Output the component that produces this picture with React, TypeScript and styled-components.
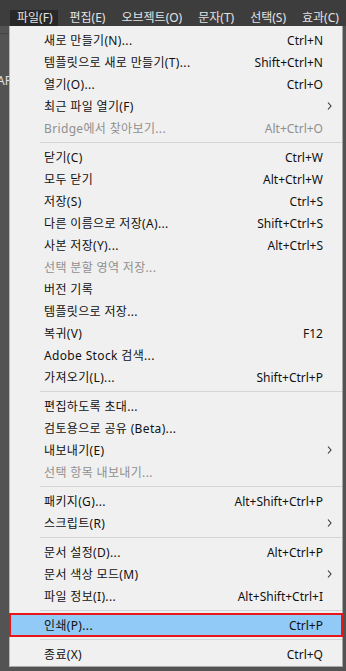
import styled, { createGlobalStyle } from 'styled-components';

const GlobalStyle = createGlobalStyle`
  html, body {
    margin: 0;
    padding: 0;
    background: #535353;
  }
  body {
    font-family: 'Noto Sans', 'Noto Sans CJK KR', sans-serif;
  }
`;

const Screen = styled.div`
  width: 346px;
  height: 671px;
  overflow: hidden;
  display: flex;
  flex-direction: column;
  background: #535353;
`;

const MenuBar = styled.div`
  height: 26px;
  flex: none;
  display: flex;
  align-items: flex-end;
  padding-left: 10px;
  background: #3d3d3d;
  box-sizing: border-box;
  overflow: hidden;
`;

const BarItem = styled.div<{ $open?: boolean }>`
  height: 16px;
  line-height: 16px;
  padding: 0 4px 0 7px;
  margin-right: 5px;
  font-size: 12px;
  color: #e4e4e4;
  white-space: nowrap;
  background: ${({ $open }) => ($open ? '#282828' : 'transparent')};

  &:first-child {
    padding-right: 5px;
  }
`;

const Body = styled.div`
  flex: 1;
  display: flex;
  min-height: 0;
`;

const SideStrip = styled.div`
  width: 9px;
  flex: none;
  overflow: hidden;
  display: flex;
  flex-direction: column;
  background: #535353;
`;

const StripLine = styled.div`
  height: 1px;
  margin-top: 7px;
  background: #444;
`;

const StripLabel = styled.div`
  margin-top: 38px;
  font-size: 12px;
  color: #e0e0e0;
  white-space: nowrap;
  margin-left: -3px;
`;

const Menu = styled.div`
  width: 334px;
  flex: none;
  align-self: flex-start;
  background: #f0f0f0;
  border-left: 1px solid #b9b9b9;
  border-right: 1px solid #a7a7a7;
  border-bottom: 1px solid #a7a7a7;
  padding: 3px 0 1px;
  box-sizing: border-box;
`;

const Row = styled.div<{ $disabled?: boolean; $active?: boolean }>`
  height: 22px;
  display: flex;
  align-items: center;
  padding-left: 34px;
  font-size: 12px;
  color: ${({ $disabled }) => ($disabled ? '#8f8f8f' : '#111')};
  background: ${({ $active }) => ($active ? '#91c9f7' : 'transparent')};
  outline: ${({ $active }) => ($active ? '2px solid #e8151b' : 'none')};
  outline-offset: -1px;
  white-space: nowrap;
`;

const Label = styled.span`
  flex: 1;
  letter-spacing: 0.35px;
`;

const Shortcut = styled.span`
  margin-right: 19px;
`;

const Arrow = styled.svg`
  width: 5px;
  height: 8px;
  margin-right: 10px;
`;

const Separator = styled.div`
  height: 7px;
  display: flex;
  align-items: center;
  padding-left: 30px;

  &::after {
    content: '';
    flex: 1;
    height: 1px;
    background: #d5d5d5;
  }
`;

type Item =
  | { sep: true }
  | { label: string; shortcut?: string; sub?: boolean; disabled?: boolean; active?: boolean };

const items: Item[] = [
  { label: '새로 만들기(N)...', shortcut: 'Ctrl+N' },
  { label: '템플릿으로 새로 만들기(T)...', shortcut: 'Shift+Ctrl+N' },
  { label: '열기(O)...', shortcut: 'Ctrl+O' },
  { label: '최근 파일 열기(F)', sub: true },
  { label: 'Bridge에서 찾아보기...', shortcut: 'Alt+Ctrl+O', disabled: true },
  { sep: true },
  { label: '닫기(C)', shortcut: 'Ctrl+W' },
  { label: '모두 닫기', shortcut: 'Alt+Ctrl+W' },
  { label: '저장(S)', shortcut: 'Ctrl+S' },
  { label: '다른 이름으로 저장(A)...', shortcut: 'Shift+Ctrl+S' },
  { label: '사본 저장(Y)...', shortcut: 'Alt+Ctrl+S' },
  { label: '선택 분할 영역 저장...', disabled: true },
  { label: '버전 기록' },
  { label: '템플릿으로 저장...' },
  { label: '복귀(V)', shortcut: 'F12' },
  { label: 'Adobe Stock 검색...' },
  { label: '가져오기(L)...', shortcut: 'Shift+Ctrl+P' },
  { sep: true },
  { label: '편집하도록 초대...' },
  { label: '검토용으로 공유 (Beta)...' },
  { label: '내보내기(E)', sub: true },
  { label: '선택 항목 내보내기...', disabled: true },
  { sep: true },
  { label: '패키지(G)...', shortcut: 'Alt+Shift+Ctrl+P' },
  { label: '스크립트(R)', sub: true },
  { sep: true },
  { label: '문서 설정(D)...', shortcut: 'Alt+Ctrl+P' },
  { label: '문서 색상 모드(M)', sub: true },
  { label: '파일 정보(I)...', shortcut: 'Alt+Shift+Ctrl+I' },
  { sep: true },
  { label: '인쇄(P)...', shortcut: 'Ctrl+P', active: true },
  { sep: true },
  { label: '종료(X)', shortcut: 'Ctrl+Q' },
];

const barItems = ['파일(F)', '편집(E)', '오브젝트(O)', '문자(T)', '선택(S)', '효과(C)'];

function App() {
  return (
    <Screen>
      <GlobalStyle />
      <MenuBar>
        {barItems.map((b, i) => (
          <BarItem key={b} $open={i === 0}>
            {b}
          </BarItem>
        ))}
      </MenuBar>
      <Body>
        <SideStrip>
          <StripLine />
          <StripLabel>AP</StripLabel>
        </SideStrip>
        <Menu>
          {items.map((item, idx) => {
            if ('sep' in item) return <Separator key={idx} />;
            return (
              <Row key={idx} $disabled={item.disabled} $active={item.active}>
                <Label>{item.label}</Label>
                {item.shortcut && <Shortcut>{item.shortcut}</Shortcut>}
                {item.sub && (
                  <Arrow viewBox="0 0 5 8">
                    <path d="M1 0.5 L4 4 L1 7.5" fill="none" stroke="#333" strokeWidth="1.1" />
                  </Arrow>
                )}
              </Row>
            );
          })}
        </Menu>
      </Body>
    </Screen>
  );
}

export default App;
